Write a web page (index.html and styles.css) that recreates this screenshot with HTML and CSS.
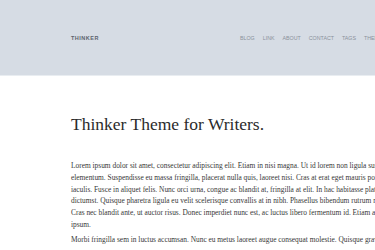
FILE: index.html
```html
<!DOCTYPE html>
<html>
<head>
<meta charset="utf-8">
<link rel="stylesheet" href="styles.css">
</head>
<body>
<header class="site-header">
  <div class="header-inner">
    <a class="brand" href="#">THINKER</a>
    <nav class="nav">
      <a href="#">BLOG</a>
      <a href="#">LINK</a>
      <a href="#">ABOUT</a>
      <a href="#">CONTACT</a>
      <a href="#">TAGS</a>
      <a href="#">THEMES</a>
    </nav>
  </div>
</header>
<main class="content">
  <h1 class="title">Thinker Theme for Writers.</h1>
  <p class="para">Lorem ipsum dolor sit amet, consectetur adipiscing elit. Etiam in nisi magna. Ut id lorem non ligula suscipit tincidunt a vel<br>elementum. Suspendisse eu massa fringilla, placerat nulla quis, laoreet nisi. Cras at erat eget mauris porta<br>iaculis. Fusce in aliquet felis. Nunc orci urna, congue ac blandit at, fringilla at elit. In hac habitasse platea<br>dictumst. Quisque pharetra ligula eu velit scelerisque convallis at in nibh. Phasellus bibendum rutrum nisl<br>Cras nec blandit ante, ut auctor risus. Donec imperdiet nunc est, ac luctus libero fermentum id. Etiam at<br>ipsum.</p>
  <p class="para">Morbi fringilla sem in luctus accumsan. Nunc eu metus laoreet augue consequat molestie. Quisque gravida</p>
</main>
</body>
</html>
```
FILE: styles.css
```css
html, body {
  margin: 0;
  padding: 0;
  background: #fff;
  overflow: hidden;
}
.site-header {
  background: #d6dce4;
  height: 75px;
  border-bottom: 1px solid #e9edf1;
  display: flex;
  align-items: center;
}
.header-inner {
  display: flex;
  align-items: center;
  padding-left: 71px;
}
.brand {
  flex: 0 0 169px;
  font-family: "Liberation Sans", Arial, sans-serif;
  font-weight: bold;
  font-size: 5.5px;
  letter-spacing: 0.5px;
  color: #5c636e;
  text-decoration: none;
}
.nav {
  display: flex;
  gap: 8px;
  white-space: nowrap;
}
.nav a {
  font-family: "Liberation Sans", Arial, sans-serif;
  font-size: 5.3px;
  color: #8a919b;
  text-decoration: none;
}
.content {
  padding-left: 71px;
  padding-top: 36px;
}
.title {
  margin: 0 0 24px;
  font-family: "Liberation Serif", Georgia, serif;
  font-weight: normal;
  font-size: 17.5px;
  line-height: 24px;
  color: #2b2b2b;
}
.para {
  margin: 0 0 3.5px;
  white-space: nowrap;
  font-family: "Liberation Serif", Georgia, serif;
  font-size: 7.4px;
  line-height: 11.8px;
  color: #383838;
}
```
